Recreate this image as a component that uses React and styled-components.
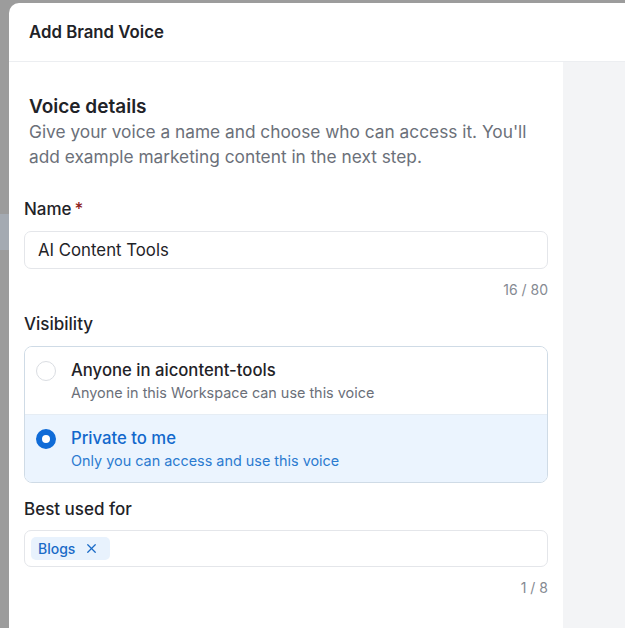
import styled, { createGlobalStyle } from 'styled-components';
import { X } from 'lucide-react';

const GlobalStyle = createGlobalStyle`
  html, body {
    margin: 0;
    padding: 0;
    background: #9c9c9c;
  }
  body {
    font-family: Inter, "Noto Sans", sans-serif;
    color: #1f2328;
  }
`;

const options = [
  {
    id: 'workspace',
    title: 'Anyone in aicontent-tools',
    hint: 'Anyone in this Workspace can use this voice',
  },
  {
    id: 'private',
    title: 'Private to me',
    hint: 'Only you can access and use this voice',
  },
];

export default function App() {
  const selected = 'private';

  return (
    <Page>
      <GlobalStyle />
      <Backdrop>
        <BackdropPatch />
      </Backdrop>
      <Modal>
        <Header>
          <HeaderTitle>Add Brand Voice</HeaderTitle>
        </Header>
        <Body>
          <FormPanel>
            <Intro>
              <SectionTitle>Voice details</SectionTitle>
              <SectionText>
                Give your voice a name and choose who can access it. You'll add example
                marketing content in the next step.
              </SectionText>
            </Intro>

            <Label>
              Name<Required>*</Required>
            </Label>
            <TextInput defaultValue="AI Content Tools" />
            <Counter>16 / 80</Counter>

            <Label>Visibility</Label>
            <RadioGroup>
              {options.map((option) => (
                <Option key={option.id} $active={option.id === selected}>
                  <Radio $active={option.id === selected} />
                  <OptionText>
                    <OptionTitle $active={option.id === selected}>{option.title}</OptionTitle>
                    <OptionHint $active={option.id === selected}>{option.hint}</OptionHint>
                  </OptionText>
                </Option>
              ))}
            </RadioGroup>

            <Label $gap={15} $below={10}>Best used for</Label>
            <TagInput>
              <Tag>
                Blogs
                <X size={15} strokeWidth={2} />
              </Tag>
            </TagInput>
            <Counter>1 / 8</Counter>
          </FormPanel>
          <SidePanel />
        </Body>
      </Modal>
    </Page>
  );
}

const Page = styled.div`
  display: flex;
  min-height: 628px;
`;

const Backdrop = styled.div`
  width: 9px;
  flex-shrink: 0;
  padding-top: 214px;
`;

const BackdropPatch = styled.div`
  height: 36px;
  background: #a4aab2;
`;

const Modal = styled.div`
  flex: 1;
  margin-top: 3px;
  background: #ffffff;
  border-top-left-radius: 10px;
  display: flex;
  flex-direction: column;
  overflow: hidden;
`;

const Header = styled.div`
  height: 58px;
  display: flex;
  align-items: center;
  padding: 0 20px;
  border-bottom: 1px solid #eceef1;
`;

const HeaderTitle = styled.h1`
  margin: 0;
  font-size: 16.8px;
  font-weight: 600;
  color: #1f2328;
`;

const Body = styled.div`
  flex: 1;
  display: flex;
`;

const FormPanel = styled.div`
  width: 554px;
  flex-shrink: 0;
  box-sizing: border-box;
  padding: 33px 15px 0;
  display: flex;
  flex-direction: column;
`;

const Intro = styled.div`
  padding-left: 5px;
  margin-bottom: 29px;
`;

const SectionTitle = styled.h2`
  margin: 0;
  font-size: 19px;
  line-height: 24px;
  font-weight: 600;
  color: #1f2328;
`;

const SectionText = styled.p`
  margin: 0;
  font-size: 17.3px;
  line-height: 25px;
  color: #6b7079;
`;

const Label = styled.div`
  font-size: 17px;
  line-height: 22px;
  font-weight: 500;
  color: #1f2328;
  margin-top: ${(p) => (p.$gap ? `${p.$gap}px` : '0')};
  margin-bottom: ${(p) => (p.$below ? `${p.$below}px` : '11px')};
`;

const Required = styled.span`
  color: #8f1d1d;
  margin-left: 3px;
`;

const TextInput = styled.input`
  box-sizing: border-box;
  height: 38px;
  width: 100%;
  border: 1px solid #e4e6ea;
  border-radius: 7px;
  padding: 0 13px;
  font-family: inherit;
  font-size: 16.8px;
  color: #1f2328;
  background: #fff;
  outline: none;
`;

const Counter = styled.div`
  text-align: right;
  font-size: 14px;
  line-height: 20px;
  color: #858a92;
  margin: 11px 0 13px;
`;

const RadioGroup = styled.div`
  border: 1px solid #cfdbe6;
  border-radius: 8px;
  overflow: hidden;
`;

const Option = styled.div`
  display: flex;
  align-items: flex-start;
  gap: 15px;
  padding: 12px 11px 11px;
  background: ${(p) => (p.$active ? '#ebf4fe' : '#ffffff')};
  & + & {
    border-top: 1px solid #e6edf4;
  }
`;

const Radio = styled.span`
  box-sizing: border-box;
  width: 20px;
  height: 20px;
  margin-top: 2px;
  flex-shrink: 0;
  border-radius: 50%;
  background: #fff;
  border: ${(p) => (p.$active ? '6px solid #0f6bd7' : '1px solid #dadde2')};
`;

const OptionText = styled.div`
  display: flex;
  flex-direction: column;
  gap: 2px;
`;

const OptionTitle = styled.span`
  font-size: 16.7px;
  line-height: 22px;
  font-weight: 500;
  color: ${(p) => (p.$active ? '#1268cc' : '#1f2328')};
`;

const OptionHint = styled.span`
  font-size: 14.4px;
  line-height: 20px;
  color: ${(p) => (p.$active ? '#2b7bd0' : '#6b7079')};
`;

const TagInput = styled.div`
  box-sizing: border-box;
  height: 37px;
  border: 1px solid #e4e6ea;
  border-radius: 7px;
  padding: 0 6px;
  display: flex;
  align-items: center;
`;

const Tag = styled.span`
  display: inline-flex;
  align-items: center;
  gap: 9px;
  height: 23px;
  padding: 0 11px 0 7px;
  border-radius: 5px;
  background: #e8f2fd;
  color: #1a6bc7;
  font-size: 14px;
  font-weight: 500;
`;

const SidePanel = styled.div`
  flex: 1;
  background: #f3f4f6;
`;
